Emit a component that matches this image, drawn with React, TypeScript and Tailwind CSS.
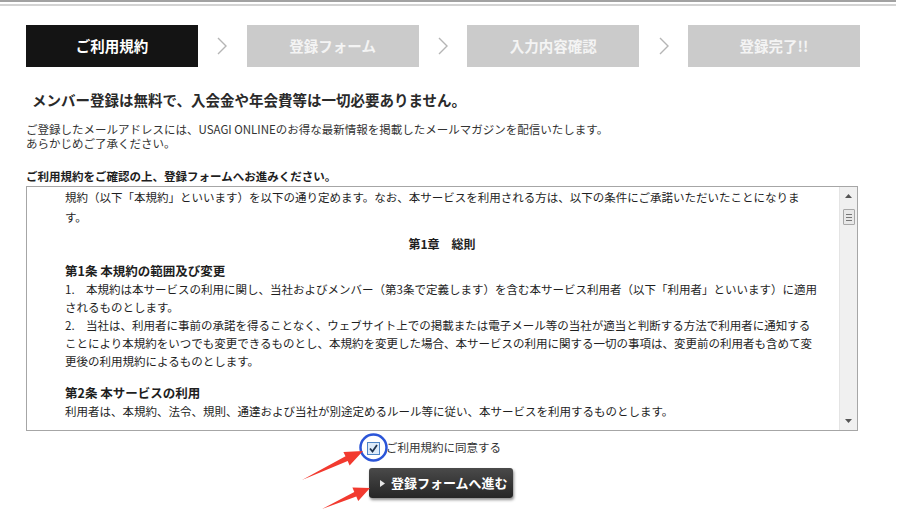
import React from 'react';

const jp = { fontFamily: '"Noto Sans CJK JP", "Noto Sans", sans-serif' };

const steps = [
  { label: 'ご利用規約', active: true },
  { label: '登録フォーム', active: false },
  { label: '入力内容確認', active: false },
  { label: '登録完了!!', active: false },
];

function Chevron() {
  return (
    <svg width="14" height="20" viewBox="0 0 14 20" className="shrink-0">
      <polyline points="3,2 11,10 3,18" fill="none" stroke="#b5b5b5" strokeWidth="1.4" />
    </svg>
  );
}

function StepBar() {
  return (
    <div className="mt-[19px] ml-[26px] w-[834px] flex items-center justify-between">
      {steps.map((s, i) => (
        <React.Fragment key={i}>
          {i > 0 ? <Chevron /> : null}
          <div
            className={
              s.active
                ? 'w-[172px] h-[42px] flex items-center justify-center bg-[#141414] text-white text-[14.5px] font-bold'
                : 'w-[172px] h-[42px] flex items-center justify-center bg-[#cbcbcb] text-[#f4f4f4] text-[14.5px] font-bold'
            }
          >
            {s.label}
          </div>
        </React.Fragment>
      ))}
    </div>
  );
}

function ScrollBar() {
  return (
    <div className="w-[18px] h-full bg-[#f0f0f0] border-l border-[#e4e4e4] flex flex-col items-center">
      <div className="h-[18px] w-full flex items-center justify-center">
        <svg width="7" height="4" viewBox="0 0 7 4">
          <polygon points="0,4 3.5,0 7,4" fill="#555" />
        </svg>
      </div>
      <div className="mt-[4px] w-[12px] h-[16px] bg-[#e8e8e8] border border-[#a8a8a8] rounded-[1px] flex flex-col items-center justify-center gap-[2px]">
        <div className="w-[6px] h-px bg-[#777]" />
        <div className="w-[6px] h-px bg-[#777]" />
        <div className="w-[6px] h-px bg-[#777]" />
      </div>
      <div className="flex-1" />
      <div className="h-[18px] w-full flex items-center justify-center">
        <svg width="7" height="4" viewBox="0 0 7 4">
          <polygon points="0,0 3.5,4 7,0" fill="#555" />
        </svg>
      </div>
    </div>
  );
}

function TermsBox() {
  const line = 'whitespace-nowrap h-[18px] leading-[18px]';
  return (
    <div className="mt-[3px] ml-[26px] w-[832px] h-[245px] border border-[#a6a6a6] flex overflow-hidden bg-white">
      <div className="flex-1 pl-[38px] pr-[10px] pt-[1px] text-[11.5px] text-[#1e1e1e]" style={jp}>
        <div className={line}>
          規約（以下「本規約」といいます）を以下の通り定めます。なお、本サービスを利用される方は、以下の条件にご承諾いただいたことになりま
        </div>
        <div className={line + ' mt-[2px]'}>す。</div>
        <div className={line + ' mt-[9px] text-center font-bold text-[12px] pr-[10px]'}>第1章　総則</div>
        <div className={line + ' mt-[9px] font-bold text-[12.5px]'}>第1条 本規約の範囲及び変更</div>
        <div className={line}>
          1.　本規約は本サービスの利用に関し、当社およびメンバー（第3条で定義します）を含む本サービス利用者（以下「利用者」といいます）に適用
        </div>
        <div className={line}>されるものとします。</div>
        <div className={line}>
          2.　当社は、利用者に事前の承諾を得ることなく、ウェブサイト上での掲載または電子メール等の当社が適当と判断する方法で利用者に通知する
        </div>
        <div className={line}>
          ことにより本規約をいつでも変更できるものとし、本規約を変更した場合、本サービスの利用に関する一切の事項は、変更前の利用者も含めて変
        </div>
        <div className={line}>更後の利用規約によるものとします。</div>
        <div className={line + ' mt-[14px] font-bold text-[12.5px]'}>第2条 本サービスの利用</div>
        <div className={line}>
          利用者は、本規約、法令、規則、通達および当社が別途定めるルール等に従い、本サービスを利用するものとします。
        </div>
      </div>
      <ScrollBar />
    </div>
  );
}

function Annotations() {
  return (
    <svg className="absolute left-0 top-0 pointer-events-none" width="900" height="517" viewBox="0 0 900 517">
      <circle cx="373.5" cy="447.5" r="13" fill="none" stroke="#2b55d8" strokeWidth="2.5" />
      <polygon points="302,480 347.7,460.9 349.6,465.5 363,451 343.4,452 345.5,456.3" fill="#f23a2f" />
      <polygon points="322,509 356.3,496.5 358.2,501 370,488 352.4,487.6 354.3,491.9" fill="#f23a2f" />
    </svg>
  );
}

export default function App() {
  return (
    <div className="relative w-[900px] h-[517px] bg-white overflow-hidden" style={jp}>
      <div className="w-[896px] h-[2px] bg-[#a2a2a2]" />
      <div className="mt-[2px] w-[896px] h-[2px] bg-[#d3d3d3]" />
      <StepBar />
      <div className="mt-[23px] pl-[32px] h-[20px] leading-[20px] text-[14.5px] font-bold text-[#2a2a2a]">
        メンバー登録は無料で、入会金や年会費等は一切必要ありません。
      </div>
      <div className="mt-[12px] pl-[26px] text-[11.5px] leading-[14px] text-[#333]">
        <div className="h-[14px]">ご登録したメールアドレスには、USAGI ONLINEのお得な最新情報を掲載したメールマガジンを配信いたします。</div>
        <div className="h-[14px]">あらかじめご了承ください。</div>
      </div>
      <div className="mt-[19px] pl-[26px] h-[14px] text-[11.5px] leading-[14px] font-bold text-[#1e1e1e]">
        ご利用規約をご確認の上、登録フォームへお進みください。
      </div>
      <TermsBox />
      <div className="mt-[9px] pl-[367px] flex items-center h-[16px]">
        <div className="w-[13px] h-[13px] border border-[#4f86c6] bg-[#dcebfa] flex items-center justify-center">
          <svg width="9" height="9" viewBox="0 0 9 9">
            <polyline points="1,4.5 3.5,7.5 8,1" fill="none" stroke="#20344f" strokeWidth="1.8" />
          </svg>
        </div>
        <span className="ml-[6px] text-[11.5px] text-[#333]">ご利用規約に同意する</span>
      </div>
      <div className="mt-[12px] pl-[369px]">
        <button className="w-[144px] h-[30px] rounded-[3px] bg-gradient-to-b from-[#4a4a4a] to-[#262626] shadow-[1px_2px_3px_rgba(0,0,0,0.45)] flex items-center pl-[11px] text-white">
          <svg width="5" height="7" viewBox="0 0 5 7">
            <polygon points="0,0 5,3.5 0,7" fill="#e6e6e6" />
          </svg>
          <span className="ml-[6px] text-[13px] font-bold">登録フォームへ進む</span>
        </button>
      </div>
      <Annotations />
    </div>
  );
}
